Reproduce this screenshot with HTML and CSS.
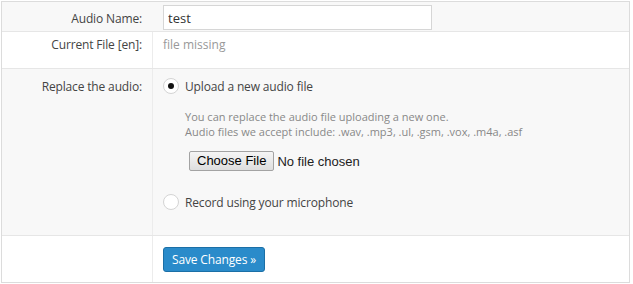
FILE: index.html
```html
<!DOCTYPE html>
<html lang="en">
<head>
    <meta charset="UTF-8">
    <title>Edit Audio</title>
    <link rel="stylesheet" href="styles.css">
</head>
<body>
    <form class="form-table">
        <div class="row row-gray row-name">
            <div class="label">Audio Name:</div>
            <div class="field">
                <input type="text" class="text-input" value="test">
            </div>
        </div>
        <div class="row row-current">
            <div class="label">Current File [en]:</div>
            <div class="field muted">file missing</div>
        </div>
        <div class="row row-gray row-replace">
            <div class="label">Replace the audio:</div>
            <div class="field">
                <label class="option">
                    <input type="radio" name="mode" checked>
                    <span>Upload a new audio file</span>
                </label>
                <div class="upload">
                    <p class="help">You can replace the audio file uploading a new one.<br>
                    Audio files we accept include: .wav, .mp3, .ul, .gsm, .vox, .m4a, .asf</p>
                    <div class="file-pick">
                        <span class="file-btn">Choose File</span>
                        <span class="file-name">No file chosen</span>
                    </div>
                </div>
                <label class="option">
                    <input type="radio" name="mode">
                    <span>Record using your microphone</span>
                </label>
            </div>
        </div>
        <div class="row row-save">
            <div class="label"></div>
            <div class="field">
                <button type="button" class="btn-save">Save Changes &raquo;</button>
            </div>
        </div>
    </form>
</body>
</html>
```

FILE: styles.css
```css
body {
    margin: 0;
    padding: 1px 0 0 1px;
    font-family: "Open Sans", Arial, sans-serif;
    font-size: 12px;
    color: #444;
    background: #fff;
}
.form-table {
    width: 627px;
    border: 1px solid #dcdcdc;
}
.row {
    display: grid;
    grid-template-columns: 151px 1fr;
    border-bottom: 1px solid #e6e6e6;
}
.row:last-child { border-bottom: none; }
.row-gray { background: #f8f8f8; }
.label {
    text-align: right;
    padding-right: 10px;
    border-right: 1px solid #ececec;
    color: #444;
    line-height: 17px;
    letter-spacing: -0.15px;
}
.field {
    padding-left: 10px;
    line-height: 17px;
}
.row-name { height: 29px; }
.row-name .label { padding-top: 8px; border-right-color: transparent; }
.row-name .field { padding-top: 3px; }
.text-input {
    box-sizing: border-box;
    width: 269px;
    height: 25px;
    margin: 0;
    border: 1px solid #d6d6d6;
    padding: 0 4px;
    font: 13px "Open Sans", Arial, sans-serif;
    color: #333;
    background: #fff;
}
.row-current { height: 36px; }
.row-current > div { padding-top: 4px; }
.muted { color: #999; }
.row-replace { height: 166px; }
.row-replace .label { padding-top: 9px; }
.row-replace .field { padding-top: 8px; }
.option {
    display: flex;
    align-items: center;
    gap: 6px;
    font-size: 12px;
    letter-spacing: -0.15px;
    color: #444;
    height: 18px;
}
.option input {
    appearance: none;
    margin: 0;
    width: 16px;
    height: 16px;
    border: 1px solid #d4d4d4;
    border-radius: 50%;
    background: #fff;
    display: grid;
    place-items: center;
    box-sizing: border-box;
}
.option input:checked::before {
    content: "";
    width: 6px;
    height: 6px;
    border-radius: 50%;
    background: #111;
}
.upload {
    padding-left: 22px;
    margin-bottom: 22px;
}
.help {
    margin: 14px 0 12px;
    font-size: 11px;
    line-height: 15px;
    color: #888;
}
.file-pick {
    display: flex;
    align-items: center;
    padding-left: 4px;
    font-family: "Liberation Sans", Arial, sans-serif;
}
.file-btn {
    box-sizing: border-box;
    height: 20px;
    padding: 0 7px;
    border: 1px solid #a3a3a3;
    border-radius: 2px;
    background: linear-gradient(#f5f5f5, #dedede);
    font-size: 13px;
    line-height: 18px;
    color: #000;
}
.file-name {
    margin-left: 3px;
    font-size: 13px;
    color: #222;
}
.row-save { height: 46px; }
.row-save .field { padding-top: 11px; }
.btn-save {
    box-sizing: border-box;
    height: 25px;
    padding: 0 8px;
    border: 1px solid #1b6fa6;
    border-radius: 3px;
    background: #2a8bca;
    color: #fff;
    font: 12px "Open Sans", Arial, sans-serif;
    letter-spacing: -0.15px;
    cursor: pointer;
}
```
